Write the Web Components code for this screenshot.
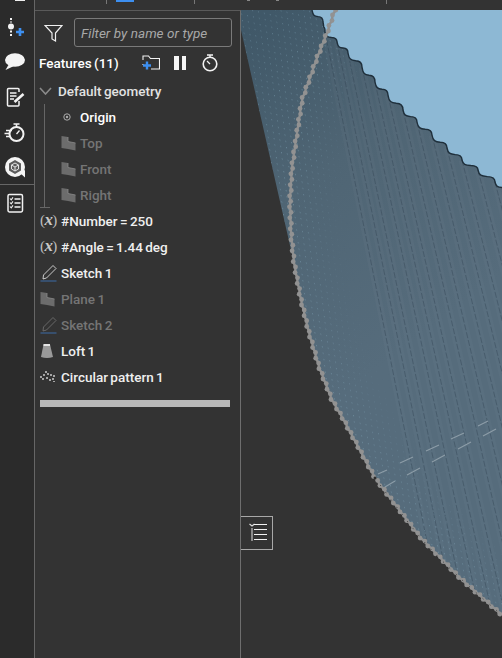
<!DOCTYPE html>
<html>
<head>
<meta charset="utf-8">
<title>Feature list</title>
<style>
  html, body { margin: 0; height: 100%; background: #333; overflow: hidden; }
  body { font-family: Roboto, "Liberation Sans", sans-serif; }
</style>
</head>
<body>
<cad-app>
  <cad-rail slot="rail"></cad-rail>
  <cad-topbar slot="top"></cad-topbar>
  <feature-panel slot="panel">
    <feature-group label="Default geometry">
      <feature-row><svg slot="icon" width="14" height="16" viewBox="0 0 14 16"><circle cx="6" cy="8" r="3.2" fill="none" stroke="#aaa" stroke-width="1"/><circle cx="6" cy="8" r="1.2" fill="#aaa"/></svg><b>Origin</b></feature-row>
      <feature-row dim icon="plane">Top</feature-row>
      <feature-row dim icon="plane">Front</feature-row>
      <feature-row dim icon="plane">Right</feature-row>
    </feature-group>
    <feature-row icon="var">#Number = 250</feature-row>
    <feature-row icon="var">#Angle = 1.44 deg</feature-row>
    <feature-row icon="sketch">Sketch 1</feature-row>
    <feature-row dim icon="plane">Plane 1</feature-row>
    <feature-row dim icon="sketch">Sketch 2</feature-row>
    <feature-row icon="loft">Loft 1</feature-row>
    <feature-row icon="pattern">Circular pattern 1</feature-row>
  </feature-panel>
  <cad-viewport slot="view"></cad-viewport>
</cad-app>

<script>
// --- Shared icon markup ---
const ICONS = {
    plane: `<svg width="16" height="16" viewBox="0 0 16 16"><path d="M0.5 1 L7 2 V6.5 L14.5 8 V15.5 L7 14 L0.5 13 Z" fill="#6c6c6c"/><path d="M7 2 V6.5 L14.5 8" fill="none" stroke="#8a8a8a" stroke-width=".8"/></svg>`,
    sketch: `<svg width="18" height="18" viewBox="0 0 18 18"><path d="M3 15 L3.5 11 L13 1.5 L16 4.5 L6.5 14 Z" fill="none" stroke="currentColor" stroke-opacity=".8" stroke-width="1"/><path d="M0.5 17 H16.5" stroke="#3d6ca8" stroke-width="1"/></svg>`,
    loft: `<svg width="14" height="16" viewBox="0 0 14 16"><path d="M3.5 1.5 H10 L13 14 Q7 16 1 14 Z" fill="#9a9a9a"/><path d="M3.5 2 H10" stroke="#e4e4e4" stroke-width="2"/></svg>`,
    pattern: `<svg width="16" height="12" viewBox="0 0 16 12" fill="#a4a4a4"><rect x="0" y="5" width="2" height="2"/><rect x="3" y="3" width="2" height="2"/><rect x="5" y="0" width="2" height="2"/><rect x="2" y="7" width="2" height="2"/><rect x="7" y="2" width="2" height="2"/><rect x="6" y="6" width="2" height="2"/><rect x="10" y="3" width="2" height="2"/><rect x="9" y="8" width="2" height="2"/><rect x="13" y="4" width="2" height="2"/><rect x="12" y="7" width="2" height="2"/><rect x="13" y="10" width="2" height="1"/></svg>`
};

const RAIL_ICONS = [
    `<svg width="24" height="24" viewBox="0 0 24 24"><circle cx="8" cy="11.5" r="3" fill="#f2f2f2"/><path d="M8 3 V7.5 M8 15.5 V21" stroke="#f2f2f2" stroke-width="2" stroke-dasharray="2 1.6"/><path d="M17 13 V21 M13 17 H21" stroke="#3d8ff0" stroke-width="2.6"/></svg>`,
    `<svg width="24" height="24" viewBox="0 0 24 24"><ellipse cx="12" cy="10" rx="10" ry="6.8" fill="#f4f4f4"/><path d="M6 14 L2.5 20 L11 16 Z" fill="#f4f4f4"/></svg>`,
    `<svg width="24" height="24" viewBox="0 0 24 24"><path d="M16 16 V20 Q16 21 15 21 H5.5 Q4.5 21 4.5 20 V4.5 Q4.5 3.5 5.5 3.5 H15 Q16 3.5 16 4.5 V7" fill="none" stroke="#f2f2f2" stroke-width="1.5"/><path d="M7 8 H13.5 M7 11 H13.5 M7 14 H11" stroke="#f2f2f2" stroke-width="1.4"/><path d="M11.5 17 L20.5 9" stroke="#f2f2f2" stroke-width="2.6"/></svg>`,
    `<svg width="24" height="24" viewBox="0 0 24 24"><circle cx="13.5" cy="14" r="7" fill="none" stroke="#f2f2f2" stroke-width="2"/><path d="M10.5 4 H16.5 M13.5 4 V7" stroke="#f2f2f2" stroke-width="1.6"/><path d="M13.5 14 L16.5 10.5" stroke="#f2f2f2" stroke-width="1.3"/><path d="M3 10.5 H9 M1.5 13.5 H7 M3 16.5 H8" stroke="#f2f2f2" stroke-width="1.3"/></svg>`,
    `<svg width="24" height="24" viewBox="0 0 24 24"><circle cx="12" cy="12" r="10" fill="#f4f4f4"/><path d="M17 18 L22 22.5 L22 15 Z" fill="#f4f4f4"/><path d="M12 5 L18 8.5 V15.5 L12 19 L6 15.5 V8.5 Z" fill="#5c5c5c"/><path d="M12 8 L15.5 10 V14 L12 16 L8.5 14 V10 Z M12 12 V16 M12 12 L8.5 10 M12 12 L15.5 10" fill="none" stroke="#e2e2e2" stroke-width="1"/></svg>`,
    `<svg width="24" height="24" viewBox="0 0 24 24"><rect x="5" y="3.5" width="14.5" height="17.5" rx="1.4" fill="none" stroke="#f2f2f2" stroke-width="1.5"/><path d="M7 7.5 L8.2 8.8 L10 6.4 M7 11.5 L8.2 12.8 L10 10.4 M7 15.5 L8.2 16.8 L10 14.4" fill="none" stroke="#f2f2f2" stroke-width="1.1"/><path d="M11.5 8 H17.5 M11.5 12 H17.5 M11.5 16 H17.5" stroke="#f2f2f2" stroke-width="1.3"/></svg>`
];

// --- Layout shell ---
class CadApp extends HTMLElement {
    constructor() {
        super();
        this.attachShadow({ mode: 'open' });
        this.shadowRoot.innerHTML = `
            <style>
                :host { display: flex; width: 502px; height: 658px; background: #333; overflow: hidden; }
                .main { flex: 1; min-width: 0; display: flex; flex-direction: column; }
                .work { flex: 1; min-height: 0; display: flex; }
            </style>
            <slot name="rail"></slot>
            <div class="main">
                <slot name="top"></slot>
                <div class="work">
                    <slot name="panel"></slot>
                    <slot name="view"></slot>
                </div>
            </div>
        `;
    }
}
customElements.define('cad-app', CadApp);

class CadRail extends HTMLElement {
    constructor() {
        super();
        this.attachShadow({ mode: 'open' });
        const buttons = RAIL_ICONS.map(icon => `<div class="btn">${icon}</div>`);
        buttons.splice(5, 0, '<div class="sep"></div>');
        this.shadowRoot.innerHTML = `
            <style>
                :host { display: flex; flex-direction: column; align-items: stretch; width: 34px; box-sizing: content-box; background: #2b2b2b; border-right: 1px solid #666; padding-top: 9px; }
                .sliver { position: absolute; left: 15px; top: 0; width: 10px; height: 1px; background: #eee; }
                .btn { height: 35px; display: flex; align-items: center; justify-content: center; padding-right: 4px; }
                .sep { height: 1px; margin-top: 0; background: #666; }
            </style>
            <div class="sliver"></div>
            ${buttons.join('')}
        `;
    }
}
customElements.define('cad-rail', CadRail);

class CadTopbar extends HTMLElement {
    constructor() {
        super();
        this.attachShadow({ mode: 'open' });
        this.shadowRoot.innerHTML = `
            <style>
                :host { display: flex; height: 10px; background: #333; align-items: flex-start; padding-left: 71px; }
                i { display: block; width: 1px; height: 4px; background: #777; }
                b { display: block; width: 18px; height: 1.5px; background: #3d8ff0; margin: 0 60px 0 9px; }
                u { display: block; width: 3px; height: 1px; background: #888; }
            </style>
            <i></i><b></b><i style="margin-right:52px"></i><u style="margin-right:26px"></u><u style="margin-right:107px"></u><i></i>
        `;
    }
}
customElements.define('cad-topbar', CadTopbar);

// --- Feature list ---
class FeaturePanel extends HTMLElement {
    constructor() {
        super();
        this.attachShadow({ mode: 'open' });
        this.shadowRoot.innerHTML = `
            <style>
                :host { display: flex; flex-direction: column; width: 205px; flex: none; background: #333; border-top: 1px solid #5a5a5a; border-right: 1px solid #6e6e6e; color: #eee; font: 500 13.5px Roboto, "Liberation Sans", sans-serif; word-spacing: -1px; }
                .filter { display: flex; align-items: center; margin-top: 7px; height: 29px; padding-left: 9px; }
                .box { margin-left: 11px; width: 150px; height: 27px; border: 1px solid #7a7a7a; border-radius: 3px; display: flex; align-items: center; padding-left: 6px; box-sizing: content-box; font-size: 13.5px; font-weight: 400; font-style: italic; word-spacing: 0.2px; color: #a8a8a8; }
                .head { display: flex; align-items: center; height: 31px; padding: 0 22px 0 4px; color: #fff; }
                .tools { margin-left: auto; display: flex; align-items: center; gap: 15px; }
                .bar { height: 7px; width: 190px; margin: 10px 0 0 5px; background: #b9b9b9; }
            </style>
            <div class="filter">
                <svg width="19" height="18" viewBox="0 0 19 18"><path d="M1 1.5 H18 L11.5 9 V17 L8 15 V9 Z" fill="none" stroke="#f0f0f0" stroke-width="1.2"/></svg>
                <div class="box">Filter by name or type</div>
            </div>
            <div class="head">
                <span>Features (11)</span>
                <div class="tools">
                    <svg width="18" height="15" viewBox="0 0 18 15"><path d="M1 5 V1 H6.5 L8.5 3.5 H17.5 V14 H9 M1 9 V10" fill="none" stroke="#f2f2f2" stroke-width="1.1"/><path d="M5 6.5 V14.5 M1 10.5 H9" stroke="#3d8ff0" stroke-width="2.4"/></svg>
                    <svg style="margin-left:-1px;margin-right:1px" width="12" height="14" viewBox="0 0 12 14"><path d="M0 0 H5 V14 H0 Z M8 0 H12 V14 H8 Z" fill="#f6f6f6"/></svg>
                    <svg width="16" height="18" viewBox="0 0 16 18"><circle cx="8" cy="10" r="6.8" fill="none" stroke="#f2f2f2" stroke-width="1.6"/><path d="M5 1 H11 M8 1 V3.5" stroke="#f2f2f2" stroke-width="1.4"/><path d="M8 10 L5 7" stroke="#f2f2f2" stroke-width="1.2"/></svg>
                </div>
            </div>
            <slot></slot>
            <div class="bar"></div>
        `;
    }
}
customElements.define('feature-panel', FeaturePanel);

class FeatureGroup extends HTMLElement {
    constructor() {
        super();
        this.attachShadow({ mode: 'open' });
        this.shadowRoot.innerHTML = `
            <style>
                :host { display: block; }
                .title { display: flex; align-items: center; height: 26px; padding-left: 4px; color: #e2e2e2; }
                .title svg { margin-right: 6px; }
                .kids { position: relative; margin-left: 9px; border-left: 1px solid #666; padding-left: 11px; --icon-w: 19px; }
                .kids::after { content: ''; position: absolute; left: -5px; bottom: 0; width: 10px; height: 1px; background: #666; }
            </style>
            <div class="title">
                <svg width="13" height="8" viewBox="0 0 13 8"><path d="M1 1 L6.5 7 L12 1" fill="none" stroke="#8a8a8a" stroke-width="1.6"/></svg>
                <span>${this.getAttribute('label')}</span>
            </div>
            <div class="kids"><slot></slot></div>
        `;
    }
}
customElements.define('feature-group', FeatureGroup);

class FeatureRow extends HTMLElement {
    constructor() {
        super();
        this.attachShadow({ mode: 'open' });
        const icon = this.getAttribute('icon');
        let glyph = '';
        if (icon === 'var') glyph = '<span class="var">(<em>x</em>)</span>';
        else if (icon) glyph = ICONS[icon];
        const isDim = this.hasAttribute('dim');
        this.shadowRoot.innerHTML = `
            <style>
                :host { display: flex; align-items: center; height: 26px; padding-left: 5px; color: ${isDim ? '#757575' : '#efefef'}; }
                .icon { width: var(--icon-w, 21px); flex: none; display: flex; align-items: center; }
                .var { font: 400 15px "Liberation Serif", serif; color: #bdbdbd; letter-spacing: -0.6px; margin-top: -3px; }
                .var em { font-size: 17px; font-weight: 700; color: #c8c8c8; }
                ::slotted(b) { color: #fff; font-weight: 500; }
            </style>
            <div class="icon"><slot name="icon">${glyph}</slot></div>
            <span><slot></slot></span>
        `;
    }
}
customElements.define('feature-row', FeatureRow);

// --- Model view ---
function smooth(points) {
    // catmull-rom through the points
    let d = `M${points[0][0]} ${points[0][1]}`;
    for (let i = 0; i < points.length - 1; i++) {
        const p0 = points[Math.max(i - 1, 0)];
        const p1 = points[i];
        const p2 = points[i + 1];
        const p3 = points[Math.min(i + 2, points.length - 1)];
        const c1 = [p1[0] + (p2[0] - p0[0]) / 6, p1[1] + (p2[1] - p0[1]) / 6];
        const c2 = [p2[0] - (p3[0] - p1[0]) / 6, p2[1] - (p3[1] - p1[1]) / 6];
        d += ` C${c1[0].toFixed(1)} ${c1[1].toFixed(1)} ${c2[0].toFixed(1)} ${c2[1].toFixed(1)} ${p2[0]} ${p2[1]}`;
    }
    return d;
}

function scallops(steps) {
    let d = '';
    for (let i = 0; i < steps.length - 1; i++) {
        const [ax, ay] = steps[i];
        const [bx, by] = steps[i + 1];
        const dx = bx - ax;
        const dy = by - ay;
        const mx = ax + dx * 0.55;
        const my = ay + dy * 0.55;
        d += ` C${ax + 1} ${(ay + dy * 0.45).toFixed(1)} ${(ax + dx * 0.2).toFixed(1)} ${(ay + dy * 0.52).toFixed(1)} ${mx.toFixed(1)} ${my.toFixed(1)}`;
        d += ` C${(ax + dx * 0.85).toFixed(1)} ${(ay + dy * 0.56).toFixed(1)} ${bx} ${(ay + dy * 0.7).toFixed(1)} ${bx} ${by}`;
    }
    return d;
}

// walk the arc polyline and drop a bead every few px, nudged side to side
function beads(points, spacing) {
    const out = [];
    let left = 0;
    for (let i = 0; i < points.length - 1; i++) {
        const [ax, ay] = points[i];
        const [bx, by] = points[i + 1];
        const len = Math.hypot(bx - ax, by - ay);
        const nx = -(by - ay) / len;
        const ny = (bx - ax) / len;
        let t = left;
        while (t < len) {
            const side = out.length % 2 ? 0.7 : -0.7;
            out.push([ax + (bx - ax) * t / len + nx * side, ay + (by - ay) * t / len + ny * side]);
            t += spacing;
        }
        left = t - len;
    }
    return out;
}

const ARC = [[335,10],[327,33],[317,58],[302,100],[297,133],[292,167],[290,200],[291,233],[294,263],[301,300],[309,333],[319,367],[332,400],[342,417],[375,478],[420,537],[460,578],[503,616]];
const WAVE = [[312,10],[323,22],[325,32],[337,42],[348,53],[362,67],[375,82],[388,95],[403,110],[417,122],[432,135],[447,148],[462,160],[478,170],[495,182],[508,192]];
const TICKS = [[378,474,387,470],[385,487,395,481],[400,463,413,457],[407,475,420,468],[426,451,439,445],[432,462,445,455],[451,439,464,433],[458,449,471,442],[478,426,488,421],[483,436,496,429]];

class CadViewport extends HTMLElement {
    constructor() {
        super();
        this.attachShadow({ mode: 'open' });
        const wave = scallops(WAVE);
        const arc = smooth(ARC);
        const below = ARC.slice(8);
        const arcBack = smooth([...below].reverse());
        const fan = `M241 10 H312 ${wave} L508 616 ${arcBack.replace(/^M\S+ \S+/, 'L503 616')} L241 30 Z`;
        const radial = WAVE.slice(2).map(([x, y], i) => {
            const slope = 0.2 + i * 0.005;
            return `<path d="M${x} ${y} L${x + slope * (660 - y)} 660"/>`;
        }).join('');
        const ticks = TICKS.map(t => `<path d="M${t[0]} ${t[1]} L${t[2]} ${t[3]}"/>`).join('');
        const beadPts = beads(ARC, 5.5);
        const beadLine = beadPts.map(p => p[0].toFixed(1) + ',' + p[1].toFixed(1)).join(' ');
        const beadDots = beadPts.map(p => `<circle cx="${p[0].toFixed(1)}" cy="${p[1].toFixed(1)}" r="2.4"/>`).join('');
        this.shadowRoot.innerHTML = `
            <style>
                :host { display: block; position: relative; flex: 1; min-width: 0; background: #333; overflow: hidden; }
                svg.model { display: block; }
                .toggle { position: absolute; left: 0; top: 506px; width: 31px; height: 32px; background: #333; border: 1px solid #a8a8a8; border-left: 0; display: flex; align-items: center; justify-content: center; }
            </style>
            <svg class="model" width="261" height="648" viewBox="241 10 261 648">
                <defs>
                    <linearGradient id="body" gradientUnits="userSpaceOnUse" x1="260" y1="20" x2="470" y2="300">
                        <stop offset="0" stop-color="#405868"/>
                        <stop offset=".45" stop-color="#4f6574"/>
                        <stop offset="1" stop-color="#566c7c"/>
                    </linearGradient>
                    <clipPath id="fan"><path d="${fan}"/></clipPath>
                    <pattern id="dots" width="6" height="6" patternUnits="userSpaceOnUse" patternTransform="rotate(13) skewX(20)">
                        <rect x="1" y="1" width="1" height="1" fill="#9cc4d8"/>
                    </pattern>
                    <filter id="soft" filterUnits="userSpaceOnUse" x="180" y="-50" width="400" height="760"><feGaussianBlur stdDeviation="16"/></filter>
                    <mask id="nearArc" maskUnits="userSpaceOnUse" x="241" y="10" width="261" height="648">
                        <path d="${arc}" fill="none" stroke="#fff" stroke-width="60" filter="url(#soft)"/>
                        <path d="M241 10 H335 L290 200 L294 267 L241 30 Z" fill="#fff" fill-opacity=".8"/>
                    </mask>
                </defs>
                <path d="M305 10 H502 V200 L400 130 L330 60 Z" fill="#8db8d4"/>
                <path d="${fan}" fill="url(#body)"/>
                <g clip-path="url(#fan)">
                    <g fill="none" stroke="#fff" stroke-opacity=".025" stroke-width="7">${radial}</g>
                    <g fill="none" stroke="#2f4150" stroke-opacity=".4" stroke-width="1" stroke-dasharray="6 2">${radial}</g>
                    <rect x="241" y="10" width="261" height="648" fill="url(#dots)" mask="url(#nearArc)" opacity=".4"/>
                    <g stroke="#8c9ca7" stroke-width="1.2">${ticks}</g>
                </g>
                <path d="M312 10${wave}" fill="none" stroke="#1f2f3b" stroke-width="1.4"/>
                <polyline points="${beadLine}" fill="none" stroke="#8f8f8f" stroke-width="2.4"/>
                <g fill="#929292">${beadDots}</g>
                <path d="${smooth(ARC.slice(14))}" fill="none" stroke="#3a3a3a" stroke-width="1" stroke-dasharray="1 8"/>
                <circle cx="375" cy="478" r="1.5" fill="#2e2e2e"/>
            </svg>
            <div class="toggle">
                <svg width="20" height="20" viewBox="0 0 20 20"><path d="M2.5 1 L5 3 L7.5 1" fill="none" stroke="#ddd" stroke-width="1.2"/><path d="M5 5 V18" stroke="#8a8a8a" stroke-width="2"/><path d="M7 1.5 H20 M7 6.5 H20 M7 11.5 H20 M7 16.5 H20" stroke="#f2f2f2" stroke-width="1"/></svg>
            </div>
        `;
    }
}
customElements.define('cad-viewport', CadViewport);
</script>
</body>
</html>
